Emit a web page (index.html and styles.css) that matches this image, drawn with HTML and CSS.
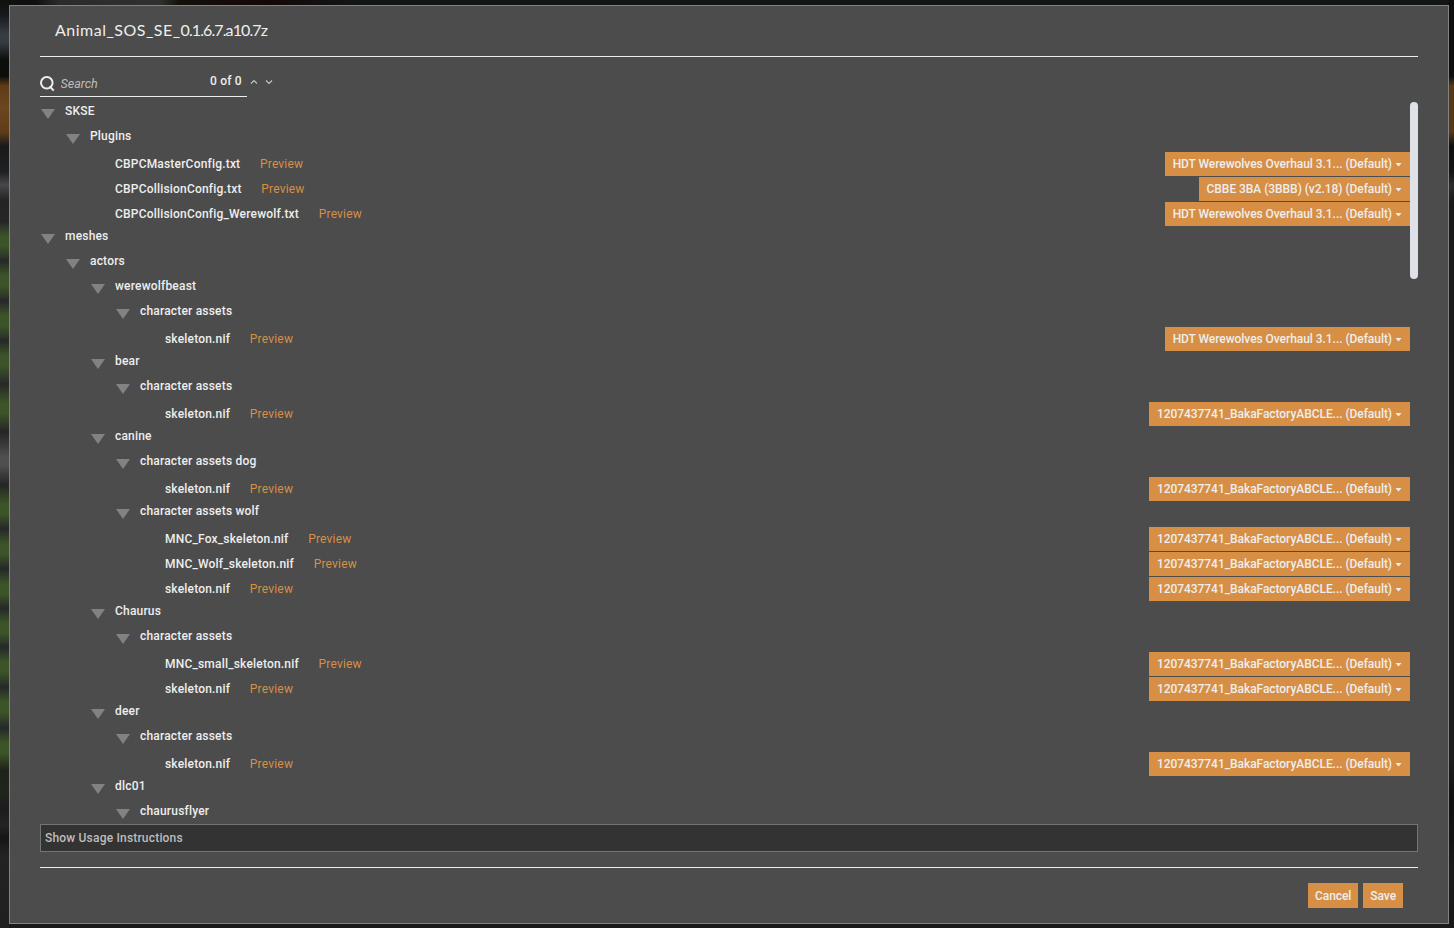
FILE: index.html
```
<!DOCTYPE html>
<html lang="en">
<head>
    <meta charset="UTF-8">
    <meta name="viewport" content="width=device-width, initial-scale=1.0">
    <title>Animal_SOS_SE_0.1.6.7.a10.7z</title>
    <link rel="stylesheet" href="styles.css">
</head>
<body>
    <div class="modal">
        <div class="modal-header">
            <h1>Animal_SOS_SE_<span class="version">0.1.6.7.a10.7z</span></h1>
        </div>
        <div class="modal-body">
            <div class="search">
                <div class="search-box">
                    <svg class="search-icon" width="16" height="16" viewBox="0 0 16 16">
                        <circle cx="6.8" cy="6.8" r="5.8"/>
                        <path d="M9.6 10.2 L13.8 14.6"/>
                    </svg>
                    <input type="text" placeholder="Search">
                    <span class="search-count">0 of 0</span>
                </div>
                <svg class="chevron" width="8" height="6" viewBox="0 0 8 6"><path d="M1 4.5 L4 1.5 L7 4.5"/></svg>
                <svg class="chevron" width="8" height="6" viewBox="0 0 8 6"><path d="M1 1.5 L4 4.5 L7 1.5"/></svg>
            </div>
            <div class="tree-wrap">
                <ul class="tree" id="tree"></ul>
                <div class="scrollbar"></div>
            </div>
            <div class="usage">Show Usage Instructions</div>
        </div>
        <div class="modal-footer">
            <button class="btn">Cancel</button>
            <button class="btn">Save</button>
        </div>
    </div>
    <script src="script.js"></script>
</body>
</html>
```
FILE: styles.css
```
* {
    box-sizing: border-box;
}
body {
    margin: 0;
    height: 928px;
    padding: 5px 5px 4px 9px;
    overflow: hidden;
    font-family: Roboto, "Liberation Sans", sans-serif;
    font-size: 12px;
    font-weight: 500;
    letter-spacing: 0.19px;
    color: #eeeeee;
    /* blurred page behind the dialog: left edge, right edge, top edge */
    background:
        linear-gradient(to bottom,
            #10110f 0, #15181a 14px, #363d42 34px, #363d42 42px, #0c0e0b 60px, #0c0e0b 76px,
            #5f3c17 86px, #6b4620 108px, #5f3c17 132px, #191a1b 146px, #1f2021 172px,
            #48484a 185px, #242425 200px, #262628 222px,
            #3c5428 236px, #3c5428 246px, #262828 261px, #3c5428 276px, #3c5428 286px, #262828 301px,
            #3c5428 316px, #3c5428 326px, #262828 341px, #3c5428 356px, #3c5428 366px, #262828 384px,
            #3c5428 403px, #3c5428 413px, #242525 432px, #4f4f50 457px, #4f4f50 465px, #242525 485px,
            #3c5428 504px, #3c5428 514px, #262828 529px, #3c5428 544px, #3c5428 554px, #262828 569px,
            #3c5428 584px, #3c5428 594px, #262828 608px, #3c5428 623px, #3c5428 633px, #262828 647px,
            #3c5428 662px, #3c5428 672px, #262828 687px, #3c5428 702px, #3c5428 712px, #262828 728px,
            #3c5428 743px, #3c5428 753px, #1e231b 770px, #20261b 790px, #1c1c1d 810px,
            #232323 825px, #151515 838px, #232323 855px, #202021 928px) left top / 9px 100% no-repeat,
        linear-gradient(to bottom,
            #0c0d0c 0, #0c0d0c 76px, #583815 86px, #583815 132px, #0e0f0e 146px, #131414 172px,
            #2c2c2d 186px, #18191a 202px, #1b1c1c 500px, #1b1c1c 760px, #101010 800px,
            #141414 840px, #1c1c1c 870px, #181818 928px) right top / 5px 100% no-repeat,
        linear-gradient(to right,
            #10110f 0, #10110f 36px, #2b2b2b 60px, #303030 160px, #141008 180px, #150708 270px,
            #121614 350px, #121614 100%) left top / 100% 5px no-repeat,
        #1b1819;
}
.modal {
    display: flex;
    flex-direction: column;
    height: 919px;
    padding: 0 30px;
    background: #4c4c4c;
    border: 1px solid #828282;
}
.modal-header {
    height: 51px;
    padding: 14px 15px 0;
    border-bottom: 1px solid #eeeeee;
}
h1 {
    margin: 0;
    font-family: Lato, "Open Sans", sans-serif;
    font-size: 16px;
    font-weight: 400;
    line-height: 20px;
    letter-spacing: 0.5px;
}
.version {
    letter-spacing: -0.9px;
}
.modal-body {
    flex: 1;
    display: flex;
    flex-direction: column;
    min-height: 0;
    padding-bottom: 15px;
}
.search {
    display: flex;
    height: 44px;
    padding-top: 14px;
    margin-bottom: -4px;
}
.search-box {
    display: flex;
    width: 207px;
    height: 26px;
    border-bottom: 1px solid #eeeeee;
}
.search-icon {
    flex: none;
    margin-top: 5px;
    fill: none;
    stroke: #eeeeee;
    stroke-width: 2;
}
.search-box input {
    width: 149px;
    height: 20px;
    margin: 2px 0 0;
    padding: 0 0 0 4.5px;
    background: none;
    border: none;
    outline: none;
    color: #eeeeee;
    font: italic 400 12.5px Roboto, sans-serif;
}
.search-box input::placeholder {
    color: #bdbdbd;
}
.search-count {
    flex: none;
    margin: 2px 0 0 5px;
    line-height: 16px;
}
.chevron {
    margin: 8px 3px 0;
    fill: none;
    stroke: #c8c8c8;
    stroke-width: 1.1;
}
.chevron + .chevron {
    margin-left: 3.5px;
}
.tree-wrap {
    flex: 1;
    display: flex;
    min-height: 0;
    padding-top: 4px;
    overflow: hidden;
}
.tree {
    flex: 1;
}
.tree, .tree ul {
    margin: 0;
    padding: 0;
    list-style: none;
}
.tree ul {
    padding-left: 25px;
}
.row {
    display: flex;
    height: 25px;
    padding-left: 25px;
    line-height: 20px;
}
.folder {
    padding-left: 0;
}
.folder::before {
    content: "";
    width: 14px;
    height: 10px;
    margin: 8px 10px 0 1px;
    background: #828282;
    clip-path: polygon(0 0, 100% 0, 50% 100%);
}
.file {
    padding-top: 1px;
    line-height: 24px;
}
.preview {
    margin-left: 19.7px;
    color: #d78f46;
    font-weight: 400;
}
.btn {
    padding: 0 7px;
    background: #d78f46;
    border: none;
    color: #eeeeee;
    font: 500 12px Roboto, sans-serif;
}
.provider {
    display: flex;
    align-items: center;
    height: 24px;
    margin-left: auto;
    padding: 0 8px;
    letter-spacing: -0.05px;
}
.provider::after {
    content: "";
    flex: none;
    width: 7px;
    height: 4px;
    margin: 1px 0 0 3px;
    background: #eeeeee;
    clip-path: polygon(0 0, 100% 0, 50% 100%);
}
.scrollbar {
    width: 8px;
    height: 177px;
    margin-top: 1px;
    background: #dee2e6;
    border-radius: 4px;
}
.usage {
    height: 28px;
    padding-left: 4px;
    background: #333333;
    border: 1px solid #757575;
    color: #bdbdbd;
    line-height: 26px;
}
.modal-footer {
    display: flex;
    justify-content: flex-end;
    gap: 5px;
    height: 56px;
    padding: 15px 15px 0;
    border-top: 1px solid #eeeeee;
}
.modal-footer .btn {
    height: 25px;
    letter-spacing: -0.08px;
}
```
FILE: script.js
```
const hdt = 'HDT Werewolves Overhaul 3.1... (Default)';
const cbbe = 'CBBE 3BA (3BBB) (v2.18) (Default)';
const baka = '1207437741_BakaFactoryABCLE... (Default)';

// folders have a list of children, files have the name of their provider
const files = [
    ['SKSE', [
        ['Plugins', [
            ['CBPCMasterConfig.txt', hdt],
            ['CBPCollisionConfig.txt', cbbe],
            ['CBPCollisionConfig_Werewolf.txt', hdt]
        ]]
    ]],
    ['meshes', [
        ['actors', [
            ['werewolfbeast', [['character assets', [['skeleton.nif', hdt]]]]],
            ['bear', [['character assets', [['skeleton.nif', baka]]]]],
            ['canine', [
                ['character assets dog', [['skeleton.nif', baka]]],
                ['character assets wolf', [
                    ['MNC_Fox_skeleton.nif', baka],
                    ['MNC_Wolf_skeleton.nif', baka],
                    ['skeleton.nif', baka]
                ]]
            ]],
            ['Chaurus', [
                ['character assets', [
                    ['MNC_small_skeleton.nif', baka],
                    ['skeleton.nif', baka]
                ]]
            ]],
            ['deer', [['character assets', [['skeleton.nif', baka]]]]],
            ['dlc01', [['chaurusflyer', []]]]
        ]]
    ]]
];

function renderNode([name, value]) {
    if (Array.isArray(value)) {
        return `<li><div class="row folder">${name}</div><ul>${value.map(renderNode).join('')}</ul></li>`;
    }
    return `<li class="row file"><span>${name}</span><span class="preview">Preview</span><button class="btn provider">${value}</button></li>`;
}

document.getElementById('tree').innerHTML = files.map(renderNode).join('');
```
